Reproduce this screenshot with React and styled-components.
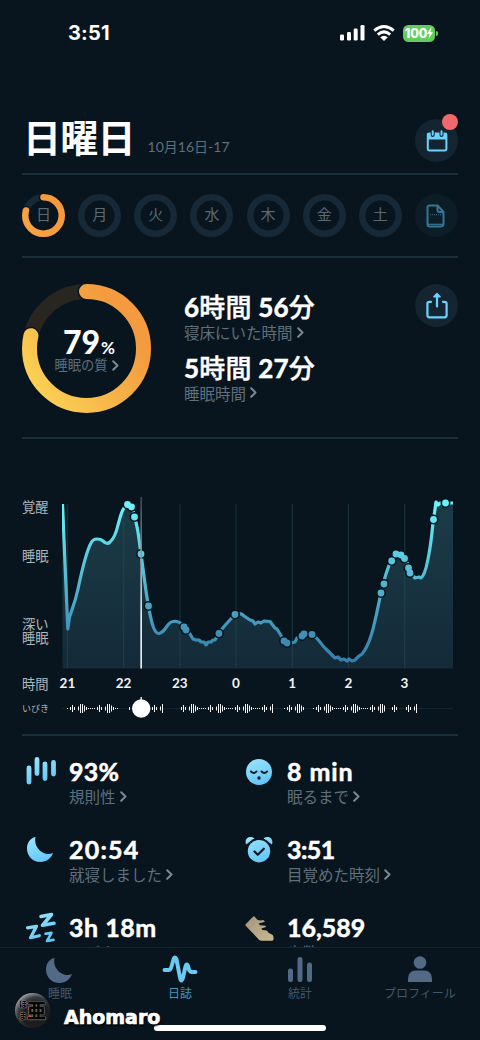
import React from "react";
import styled, { createGlobalStyle } from "styled-components";

const BG = "#08151e";
const CYAN = "#6bd3fb";
const MUTED = "#5f6f7c";
const LINE = "#1b2e3b";
const JP = `"Noto Sans CJK JP", sans-serif`;
const ROUND = `Lato, "Noto Sans CJK JP", sans-serif`;

const GlobalStyle = createGlobalStyle`
  * { box-sizing: border-box; }
  body { margin: 0; background: ${BG}; }
  svg { display: block; flex: none; }
`;

const Screen = styled.main`
  position: relative;
  width: 480px;
  height: 1040px;
  overflow: hidden;
  background: ${BG};
  color: #fff;
  font-family: ${JP};
`;

const StatusBar = styled.header`
  display: flex;
  justify-content: space-between;
  align-items: center;
  height: 66px;
  padding: 0 42px 0 68px;
`;

const Clock = styled.time`
  font: 700 20px/24px Inter, sans-serif;
  letter-spacing: 0.2px;
`;

const StatusIcons = styled.div`
  display: flex;
  align-items: center;
  gap: 8px;
`;

const Battery = styled.div`
  position: relative;
  display: flex;
  align-items: center;
  justify-content: center;
  width: 32px;
  height: 17px;
  margin-right: 3px;
  border-radius: 5.5px;
  background: #62cd5f;
  font: 800 12.5px/17px Inter, sans-serif;
  letter-spacing: -0.1px;

  &::after {
    content: "";
    position: absolute;
    right: -3px;
    top: 6px;
    width: 2px;
    height: 5px;
    border-radius: 0 2px 2px 0;
    background: #62cd5f;
  }
`;

const Content = styled.div`
  padding: 0 22px;
`;

const Section = styled.section`
  height: ${(p) => p.$height}px;
  border-bottom: 2px solid ${LINE};
`;

const TitleRow = styled(Section)`
  display: flex;
  justify-content: space-between;
  padding-top: 53px;
`;

const TitleGroup = styled.div`
  display: flex;
  align-items: baseline;
  height: 42px;
  gap: 13px;
  margin: -2px 0 0 1px;
`;

const Title = styled.h1`
  margin: 0;
  font-size: 38px;
  line-height: 38px;
  font-weight: 700;
  letter-spacing: -0.8px;
`;

const DateText = styled.span`
  color: ${MUTED};
  font: 400 14px/20px ${ROUND};
`;

const CircleButton = styled.button`
  position: relative;
  display: flex;
  align-items: center;
  justify-content: center;
  flex: none;
  width: 43px;
  height: 43px;
  padding: 0;
  border: 0;
  border-radius: 50%;
  background: ${(p) => (p.$dim ? "#0d1d27" : "#142531")};
`;

const Badge = styled.span`
  position: absolute;
  right: 0;
  top: -5px;
  width: 16px;
  height: 16px;
  border-radius: 50%;
  background: #f0686b;
`;

const WeekRow = styled(Section)`
  display: flex;
  justify-content: space-between;
  padding-top: 19px;
`;

const Day = styled.div`
  display: grid;
  place-items: center;
  width: 43px;
  height: 43px;
  > * { grid-area: 1 / 1; }
`;

const DayName = styled.span`
  color: #5b6973;
  font-size: 15px;
  line-height: 20px;
  margin-top: -4px;
`;

const Summary = styled(Section)`
  display: flex;
  padding-top: 26px;
`;

const Quality = styled.div`
  display: grid;
  width: 129px;
  height: 129px;
  > * { grid-area: 1 / 1; }
`;

const QualityText = styled.div`
  display: flex;
  flex-direction: column;
  align-items: center;
  padding-top: 42px;
`;

const Percent = styled.div`
  height: 30px;
  padding-left: 5px;
  font: 900 32px/32px ${ROUND};
  small { font-size: 17px; font-weight: 700; margin-left: 1px; }
`;

const Caption = styled.div`
  display: flex;
  align-items: center;
  gap: 4px;
  height: 18px;
  color: ${MUTED};
  font-size: ${(p) => p.$size ?? 15.5}px;
  line-height: 18px;
  white-space: nowrap;
`;

const Durations = styled.div`
  flex: 1;
  padding: 8px 0 0 33px;
`;

const Duration = styled.div`
  height: 60.5px;
`;

const BigValue = styled.div`
  height: 31px;
  font: 700 ${(p) => p.$size ?? 25}px/30px ${ROUND};
  letter-spacing: ${(p) => p.$spacing ?? 0}px;
  -webkit-text-stroke: 0.5px #fff;
  white-space: nowrap;
`;

const Unit = styled.span`
  font-weight: 500;
  -webkit-text-stroke: 0.4px #fff;
`;

const ChartSection = styled(Section)`
  padding-top: 57px;
`;

const ChartRow = styled.div`
  display: flex;
  height: 173px;
`;

const StageLabels = styled.div`
  display: flex;
  flex-direction: column;
  width: 40px;
  color: #b0b9be;
  font-size: 13.3px;
  line-height: 14px;
  span:nth-child(1) { margin-top: 4px; }
  span:nth-child(2) { margin-top: 35px; }
  span:nth-child(3) { margin-top: 54px; }
`;

const HourRow = styled.div`
  display: flex;
  align-items: center;
  height: 28px;
  color: #b0b9be;
  font-size: 13.3px;
`;

const Hours = styled.div`
  display: flex;
  margin-left: -22.7px;
  color: #f0f3f5;
  font: 700 13.5px/20px ${ROUND};
  span { width: 56.2px; text-align: center; }
`;

const SnoreRow = styled.div`
  display: flex;
  align-items: center;
  height: 22px;
  color: #b0b9be;
  font-size: 9px;
`;

const RowLabel = styled.span`
  width: 40px;
  flex: none;
`;

const Stats = styled.section`
  display: grid;
  grid-template-columns: 218px 218px;
  grid-auto-rows: 78px;
  padding-top: 20px;
`;

const Stat = styled.div`
  display: flex;
  gap: 9px;
`;

const TabBar = styled.nav`
  position: absolute;
  left: 0;
  bottom: 0;
  display: grid;
  grid-template-columns: repeat(4, 1fr);
  width: 480px;
  height: 93px;
  padding-top: 7px;
  border-top: 1px solid #152631;
  background: ${BG};
`;

const Tab = styled.a`
  display: flex;
  flex-direction: column;
  align-items: center;
  color: ${(p) => (p.$active ? "#4299bd" : "#43586b")};
  font-size: 12px;
  line-height: 18px;
`;

const HomeIndicator = styled.div`
  position: absolute;
  left: 154px;
  bottom: 9px;
  width: 172px;
  height: 6px;
  border-radius: 3px;
  background: #fff;
`;

const Signature = styled.div`
  position: absolute;
  left: 15px;
  bottom: 12px;
  display: flex;
  align-items: center;
  gap: 14px;
`;

const SignatureName = styled.span`
  padding-top: 14px;
  font: 700 19px/22px "DejaVu Sans", sans-serif;
  text-shadow: 1px 2px 2px #000;
  -webkit-text-stroke: 0.7px #fff;
`;

const Avatar = styled.div`
  display: flex;
  align-items: center;
  justify-content: center;
  width: 35px;
  height: 35px;
  border-radius: 50%;
  background:
    radial-gradient(circle at 44% 44%, #d3293f 0 1px, transparent 3px),
    radial-gradient(circle at 42% 68%, #d3293f 0 1px, transparent 3px),
    radial-gradient(circle at 62% 66%, #1d1d1e 40%, #3a3c3e 60%, #94989a 75%);
  color: #050505;
  font-weight: 900;
  text-shadow: 0 0 1px #b5b5b5, 0 0 1px #b5b5b5;
`;

const Kana = styled.span`
  display: flex;
  flex-direction: column;
  font-size: 8px;
  line-height: 12px;
`;

const Kanji = styled.span`
  font-size: 19px;
  line-height: 26px;
`;

function Chevron() {
  return (
    <svg width="7" height="11" viewBox="0 0 7 11">
      <path d="M1.2 1.2 5.5 5.5 1.2 9.8" fill="none" stroke="#7b8993" strokeWidth="2" strokeLinecap="round" strokeLinejoin="round" />
    </svg>
  );
}

function Signal() {
  return (
    <svg width="25" height="16" viewBox="0 0 25 16" fill="#fff">
      <rect x="0" y="9.5" width="4" height="6" rx="1.3" />
      <rect x="7" y="7" width="4" height="8.5" rx="1.3" />
      <rect x="13.7" y="3.6" width="4" height="12" rx="1.3" />
      <rect x="20.5" y="0" width="4" height="15.6" rx="1.3" />
    </svg>
  );
}

function Wifi() {
  return (
    <svg width="22" height="16" viewBox="0 0 22 16" fill="none" stroke="#fff" strokeWidth="3">
      <path d="M1.2 5.6Q11-2.5 20.8 5.600" />
      <path d="M4.800 9.600Q11 4.200 17.200 9.600" />
      <path d="M11 16 7.200 12.300Q11 9.300 14.800 12.300Z" fill="#fff" stroke="none" />
    </svg>
  );
}

function Ring({ size, width, value, track, colors, id }) {
  const c = size / 2;
  const r = c - width / 2;
  const len = 2 * Math.PI * r;
  const arc = { cx: c, cy: c, r, fill: "none", strokeLinecap: "round", strokeDasharray: `${len * (value || 0)} ${len}` };
  return (
    <svg width={size} height={size} viewBox={`0 0 ${size} ${size}`}>
      <circle cx={c} cy={c} r={r} fill="none" stroke={track} strokeWidth={width} />
      {value && (
        <g transform={`rotate(-90 ${c} ${c})`}>
          <defs>
            <linearGradient id={id} gradientUnits="userSpaceOnUse" x1={size * 0.75} y1={size * 0.75} x2={size * 0.25} y2={size * 0.05}>
              <stop stopColor={colors[0]} />
              <stop offset="1" stopColor={colors[1]} />
            </linearGradient>
          </defs>
          <circle {...arc} stroke={BG} strokeWidth={width + 3} />
          <circle {...arc} stroke={`url(#${id})`} strokeWidth={width} />
        </g>
      )}
    </svg>
  );
}

function CalendarIcon() {
  return (
    <svg width="22" height="22" viewBox="0 0 22 22">
      <rect x="1.8" y="3.4" width="18.6" height="17" rx="1.4" fill="none" stroke={CYAN} strokeWidth="2" />
      <path d="M1.5 3h19.2v6.5H1.5z" fill={CYAN} />
      <path d="M6.7 0.5v4.600M15.500 0.500v4.600" stroke="#142531" strokeWidth="4" strokeLinecap="round" />
      <path d="M6.700 1.300v3.500M15.500 1.300v3.500" stroke={CYAN} strokeWidth="2" strokeLinecap="round" />
    </svg>
  );
}

function NoteIcon() {
  return (
    <svg width="20" height="24" viewBox="0 0 20 24" fill="none" stroke="#397590" strokeWidth="2" strokeLinejoin="round">
      <path d="M3.500 1.500h8l6 6.500v11.500q0 3-3 3h-11q-2 0-2-2v-17q0-2 2-2Z" />
      <path d="M11.500 1.500V6q0 2 2 2h4" />
      <path d="M2 20.300h15" strokeWidth="1.200" />
      <path d="M4 10.800h12" strokeWidth="1" strokeDasharray="1 1" />
    </svg>
  );
}

function ShareIcon() {
  return (
    <svg width="22" height="28" viewBox="0 0 22 28" fill="none" stroke={CYAN} strokeWidth="2.200" strokeLinecap="round" strokeLinejoin="round">
      <path d="M5 9.800H3.400q-2 0-2 2v11.500q0 2 2 2h15.200q2 0 2-2V11.800q0-2-2-2H17" />
      <path d="M11 14.500V3" />
      <path d="M7.800 4.800 11 1.400l3.200 3.400Z" fill={CYAN} strokeWidth="1.300" />
    </svg>
  );
}

const curve =
  "M62.500 504L67.800 629 69.500 617C72 609 75 603 78 589C82 570 86 552 91 543Q93 539 97 539T103 541Q107 545 110 542Q115 538 118 525C121 514 122 509 127 504.500C131 502 133 509 134.500 517C139 531 139 542 141 554C144 575 146 594 148.500 606C151 621 154 634 159 633.500C166 632 167 622 173 621.500Q179 620 184 627L190 634 193 639 196 640 199 640 201 642 204 642 206 645 208 642 211 642 213 640 215 640Q218 634 222 629T235 614.500Q241 612 244 616L250 620 253 621 255 624 258 622 261 623 264 621 270 621.500 275 628 277 629 285 642 291 643 295 642 297 638 301 636 305 634Q309 632 313 635C319 639 322 646 327 650L332 655 335 658 338 657 341 660 344 659 347 661 349 659 352 661 355 660 359 656 362 654C372 643 376 615 381 593Q386 571 391 561Q396 551 402 556Q406 559 409 567T415 578L419 577 421 578Q425 575 428 559C432 540 432 528 433.500 520L436 502 438 505 440 503 444 503H453";

const dots = [
  [127.500, 504.500], [131.500, 507], [134.500, 517], [141, 554], [148.500, 606], [184, 627], [186, 630], [219, 633.500], [235, 614.500],
  [284, 641], [287, 643], [302, 636], [304, 634], [312, 634.500], [381, 593], [384, 584], [391.700, 561], [396, 554], [401, 555], [404.500, 558.500],
  [408.500, 568], [410, 573], [433.500, 519.500], [445.500, 503],
];

function SleepChart() {
  return (
    <svg width="396" height="173" viewBox="62 496 396 173">
      <defs>
        <linearGradient id="stroke" gradientUnits="userSpaceOnUse" x1="0" y1="504" x2="0" y2="660">
          <stop stopColor="#6af3fb" />
          <stop offset="0.500" stopColor="#53b7cf" />
          <stop offset="1" stopColor="#347fab" />
        </linearGradient>
        <linearGradient id="area" gradientUnits="userSpaceOnUse" x1="0" y1="504" x2="0" y2="668">
          <stop stopColor="#1b3c47" />
          <stop offset="1" stopColor="#142a38" />
        </linearGradient>
        <linearGradient id="cursor" gradientUnits="userSpaceOnUse" x1="0" y1="497" x2="0" y2="668">
          <stop stopColor="#3d4a54" />
          <stop offset="0.400" stopColor="#9da5aa" />
          <stop offset="0.700" stopColor="#fff" />
        </linearGradient>
      </defs>
      <path d={curve + "V668.500H62.500Z"} fill="url(#area)" />
      {[67.500, 123.700, 180, 236, 292.300, 348.500, 404.700].map((x) => (
        <path key={x} d={`M${x} 504V668.500`} stroke="#29505b" strokeOpacity="0.450" strokeWidth="1.300" />
      ))}
      <path d={curve} fill="none" stroke="url(#stroke)" strokeWidth="3.200" strokeLinejoin="round" />
      {dots.map(([x, y], i) => <circle key={i} cx={x} cy={y} r="5" fill={BG} />)}
      {dots.map(([x, y], i) => <circle key={i} cx={x} cy={y} r="3.400" fill="url(#stroke)" />)}
      <rect x="140.400" y="497" width="1.500" height="171.500" fill="url(#cursor)" />
    </svg>
  );
}

const runs = [[67, 117, 72], [128, 162, 127], [179, 273, 183], [284, 303, 289], [313, 384, 318], [390, 399, 394], [404, 417, 408]];
const pulse = { "-2": 3, 0: 7, 2: 3, 6: 4, 8: 9, 10: 9, 12: 6, 14: 3 };

function SnoreTrack() {
  const bars = [];
  runs.forEach(([start, end, anchor]) => {
    for (let x = start; x <= end; x += 1) {
      const phase = (((x - anchor + 3) % 27) + 27) % 27 - 3;
      if (pulse[phase]) bars.push([x, pulse[phase]]);
      else if (phase > 14 && phase % 2 === 0) bars.push([x, 1]);
    }
  });
  return (
    <svg width="396" height="22" viewBox="62 697 396 22">
      <path d="M62 708.500H453" stroke="#14252f" />
      {bars.map(([x, h]) => <rect key={x} x={x} y={708.500 - h / 2} width="1" height={h} fill="#f2f4f5" />)}
      <path d="M141.200 697V708" stroke="#fff" strokeWidth="1.300" />
      <circle cx="141.200" cy="708.500" r="9.200" fill="#fff" />
    </svg>
  );
}

function BlueFill() {
  return (
    <defs>
      <linearGradient id="blue" gradientUnits="userSpaceOnUse" x1="8" y1="0" x2="22" y2="32">
        <stop stopColor="#a0e6fb" />
        <stop offset="1" stopColor="#5bc4f8" />
      </linearGradient>
    </defs>
  );
}

const moon = "M13.500 3C8 4 5 9 5 14.500 5 22 10.500 28 18.500 28c6 0 11-4 12.500-9C23 23 11 14.500 13.500 3Z";

const statIcons = {
  bars: <path d="M7 12v14M15 3.500v14M23 8v14.500M31.500 6.500v11.500" stroke="url(#blue)" strokeWidth="4.800" strokeLinecap="round" />,
  moon: <path d={moon} fill="url(#blue)" />,
  snore: (
    <g fill="none" stroke="url(#blue)" strokeLinecap="round" strokeLinejoin="round">
      <path d="M19 4.500 29.500 2.500 20.500 13.300 32 11.300" strokeWidth="3.600" />
      <path d="M5.500 15.800 14.500 14.300 8.500 25.700 17.300 23.700" strokeWidth="3.200" />
      <path d="M23.500 21.800 29.500 20.900 25 29 31.500 27.900" strokeWidth="2.600" />
    </g>
  ),
  face: (
    <>
      <circle cx="19" cy="16" r="13" fill="url(#blue)" />
      <path d="M11 15.500q3 3 5.500 0M21.500 15.500q3 3 5.500 0" fill="none" stroke={BG} strokeWidth="1.900" strokeLinecap="round" />
      <circle cx="19" cy="22" r="1.700" fill={BG} />
    </>
  ),
  alarm: (
    <>
      <path d="M6 10.500C4 4 10 1 14.500 4.500M32 10.500C34 4 28 1 23.500 4.500" fill="url(#blue)" />
      <circle cx="19" cy="17" r="13" fill={BG} />
      <circle cx="19" cy="17.200" r="11.200" fill="url(#blue)" />
      <path d="m14.500 17.500 3.300 3.200 6-6" fill="none" stroke={BG} strokeWidth="2.200" strokeLinecap="round" strokeLinejoin="round" />
    </>
  ),
  shoe: (
    <>
      <defs>
        <linearGradient id="tan" x1="0" y1="0" x2="1" y2="1">
          <stop stopColor="#a5967b" />
          <stop offset="1" stopColor="#c9b893" />
        </linearGradient>
      </defs>
      <path d="M5.700 12.200 13 4.700Q14 3.800 15 5L17 7.500Q20 9 23.300 8L25 9.800 18.500 11.500 20 13.200 25.300 13.800 26 15 21.300 16.500 22.300 18 26.800 18.500Q28.500 21.500 31 22 33.500 23 33.500 25V27.300Q33.500 28.700 32 28.700H21.500Q20 28.700 19 27.700L5.700 13.700Q5 13 5.700 12.200Z" fill="url(#tan)" />
    </>
  ),
};

const stats = [
  { icon: "bars", value: "93%", label: "規則性", spacing: 0.2 },
  { icon: "face", value: "8 min", label: "眠るまで", spacing: 0.9 },
  { icon: "moon", value: "20:54", label: "就寝しました", spacing: 1.2 },
  { icon: "alarm", value: "3:51", label: "目覚めた時刻", spacing: -0.6 },
  { icon: "snore", value: "3h 18m", label: "いびき", spacing: 0.5 },
  { icon: "shoe", value: "16,589", label: "歩数", spacing: 0 },
];

function StatCell({ icon, value, label, spacing }) {
  return (
    <Stat>
      <svg width="38" height="32" viewBox="0 0 38 32"><BlueFill />{statIcons[icon]}</svg>
      <div>
        <BigValue $spacing={spacing}>{value}</BigValue>
        <Caption>{label}<Chevron /></Caption>
      </div>
    </Stat>
  );
}

const tabIcons = {
  moon: <path d={moon} fill="#526a85" />,
  wave: <path d="M3.500 15.500h4q2 0 3-3.500l2-7q1.500-4 3 0L19 23q1.300 6 3 0l2.500-11q1.300-4 2.700 0 1 6 3.800 5.500h3.500" transform="translate(0 -.5)" fill="none" stroke="#69cbf3" strokeWidth="4" strokeLinecap="round" strokeLinejoin="round" />,
  bars: <path d="M9.500 16v8.500M19 4.500v20M28.500 10v14.500" stroke="#526a85" strokeWidth="5" strokeLinecap="round" />,
  person: <g fill="#526a85"><circle cx="19" cy="7.500" r="6.300" /><path d="M7 27v-3q0-8.500 8-8.500h8q8 0 8 8.500v3Z" /></g>,
};

function TabItem({ icon, label, active }) {
  return (
    <Tab $active={active}>
      <svg width="38" height="29" viewBox="0 0 38 29">{tabIcons[icon]}</svg>
      {label}
    </Tab>
  );
}

export default function App() {
  return (
    <Screen>
      <GlobalStyle />
      <StatusBar>
        <Clock>3:51</Clock>
        <StatusIcons>
          <Signal />
          <Wifi />
          <Battery>
            100
            <svg width="6" height="12" viewBox="0 0 6 12"><path d="M4.500 0 0 6.700h2.500L1.500 12 6 5.200H3.500Z" fill="#fff" /></svg>
          </Battery>
        </StatusIcons>
      </StatusBar>
      <Content>
        <TitleRow $height={109}>
          <TitleGroup>
            <Title>日曜日</Title>
            <DateText>10月16日-17</DateText>
          </TitleGroup>
          <CircleButton aria-label="カレンダー"><CalendarIcon /><Badge /></CircleButton>
        </TitleRow>
        <WeekRow $height={83}>
          {["日", "月", "火", "水", "木", "金", "土"].map((day, i) => (
            <Day key={day}>
              <Ring size={43} width={6.500} track="#172837" value={i === 0 ? 0.79 : undefined} colors={["#f49a3c", "#f7a344"]} id="dayRing" />
              <DayName>{day}</DayName>
            </Day>
          ))}
          <CircleButton $dim aria-label="メモ"><NoteIcon /></CircleButton>
        </WeekRow>
        <Summary $height={181}>
          <Quality>
            <Ring size={129} width={15} track="#292620" value={0.785} colors={["#f39b3e", "#fbd154"]} id="qualityRing" />
            <QualityText>
              <Percent>79<small>%</small></Percent>
              <Caption $size={13.300}>睡眠の質<Chevron /></Caption>
            </QualityText>
          </Quality>
          <Durations>
            <Duration>
              <BigValue $size={26} $spacing={0.200}>6<Unit>時間</Unit> 56<Unit>分</Unit></BigValue>
              <Caption>寝床にいた時間<Chevron /></Caption>
            </Duration>
            <Duration>
              <BigValue $size={26} $spacing={0.200}>5<Unit>時間</Unit> 27<Unit>分</Unit></BigValue>
              <Caption>睡眠時間<Chevron /></Caption>
            </Duration>
          </Durations>
          <CircleButton aria-label="共有"><ShareIcon /></CircleButton>
        </Summary>
        <ChartSection $height={297}>
          <ChartRow>
            <StageLabels><span>覚醒</span><span>睡眠</span><span>深い<br />睡眠</span></StageLabels>
            <SleepChart />
          </ChartRow>
          <HourRow>
            <RowLabel>時間</RowLabel>
            <Hours>{["21", "22", "23", "0", "1", "2", "3"].map((h) => <span key={h}>{h}</span>)}</Hours>
          </HourRow>
          <SnoreRow><RowLabel>いびき</RowLabel><SnoreTrack /></SnoreRow>
        </ChartSection>
        <Stats>
          {stats.map((stat) => <StatCell key={stat.icon} {...stat} />)}
        </Stats>
      </Content>
      <TabBar>
        <TabItem icon="moon" label="睡眠" />
        <TabItem icon="wave" label="日誌" active />
        <TabItem icon="bars" label="統計" />
        <TabItem icon="person" label="プロフィール" />
      </TabBar>
      <HomeIndicator />
      <Signature>
        <Avatar>
          <Kana><span>ほ</span><span>ま</span></Kana>
          <Kanji>亜</Kanji>
        </Avatar>
        <SignatureName>Ahomaro</SignatureName>
      </Signature>
    </Screen>
  );
}
